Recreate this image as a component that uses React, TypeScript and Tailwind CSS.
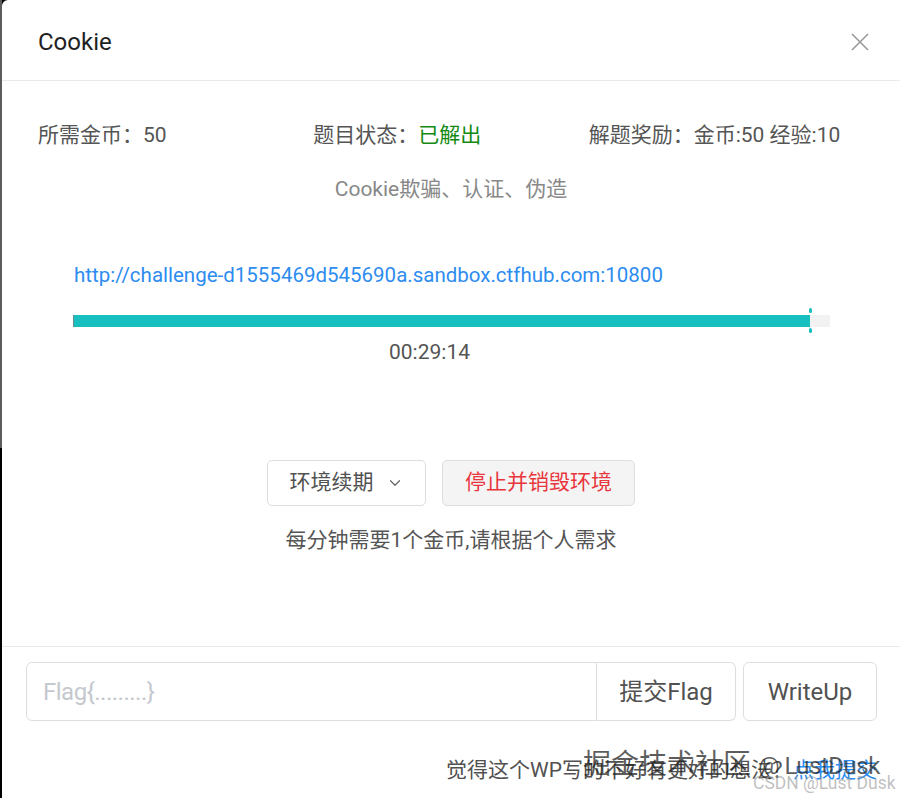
import { ChevronDown } from "lucide-react";

const font = {
  fontFamily: '"Roboto", "Noto Sans CJK SC", sans-serif',
};

function CloseIcon() {
  return (
    <svg width="20" height="20" viewBox="0 0 20 20" className="text-[#999]">
      <path d="M2 2 L18 18 M18 2 L2 18" stroke="currentColor" strokeWidth="1.6" fill="none" />
    </svg>
  );
}

export default function App() {
  const filled = 97.4;
  return (
    <div className="flex h-[798px] w-[900px] overflow-hidden bg-black" style={font}>
      {/* backdrop sliver on the left */}
      <div className="flex w-[2px] flex-col">
        <div className="h-[448px] bg-[#5c5c5c]" />
        <div className="flex-1 bg-black" />
      </div>

      <div className="relative flex flex-1 flex-col rounded-tl-[6px] bg-white">
        {/* header */}
        <div className="flex h-[81px] items-center justify-between border-b border-[#e8eaec] pl-[36px] pr-[30px] pt-[3px]">
          <span className="text-[24px] font-normal text-[#1f1f1f]">Cookie</span>
          <CloseIcon />
        </div>

        {/* body */}
        <div className="flex h-[565px] flex-col">
          <div className="mt-[40px] grid grid-cols-3 px-[36px] text-[21px] leading-[28px] text-[#555]">
            <div>所需金币：50</div>
            <div>
              题目状态：<span className="text-[#138a13]">已解出</span>
            </div>
            <div>解题奖励：金币:50 经验:10</div>
          </div>

          <div className="mt-[26px] text-center text-[21px] leading-[28px] text-[#888]">
            Cookie欺骗、认证、伪造
          </div>

          <div className="mt-[58px] pl-[72px] pr-[70px]">
            <div className="text-[20.5px] leading-[28px] text-[#2d8cf0]">
              http://challenge-d1555469d545690a.sandbox.ctfhub.com:10800
            </div>
            <div className="relative mt-[26px] h-[12px] bg-[#f2f2f2]">
              <div className="h-full bg-[#17c0bf]" style={{ width: `${filled}%` }} />
              <div className="absolute left-[-1px] top-0 h-full w-[1px] bg-[#6a8f8e]" />
              <div
                className="absolute top-[-7px] h-[5px] w-[3px] rounded-full bg-[#17c0bf]"
                style={{ left: `calc(${filled}% - 1px)` }}
              />
              <div
                className="absolute bottom-[-6px] h-[5px] w-[3px] rounded-full bg-[#17c0bf]"
                style={{ left: `calc(${filled}% - 1px)` }}
              />
            </div>
            <div className="mt-[11px] pl-[315px] text-[21px] leading-[28px] text-[#555]">00:29:14</div>
          </div>

          <div className="mt-[94px] flex justify-center gap-[16px]">
            <button className="flex h-[46px] w-[159px] items-center justify-center gap-[12px] rounded-[5px] border border-[#dcdee2] bg-white text-[21px] text-[#515151]">
              <span>环境续期</span>
              <ChevronDown size={18} strokeWidth={1.6} className="text-[#666]" />
            </button>
            <button className="flex h-[46px] w-[193px] items-center justify-center rounded-[5px] border border-[#dcdee2] bg-[#f4f4f4] text-[21px] text-[#e9363c]">
              停止并销毁环境
            </button>
          </div>

          <div className="mt-[20px] text-center text-[21px] leading-[28px] text-[#555]">
            每分钟需要1个金币,请根据个人需求
          </div>
        </div>

        {/* footer */}
        <div className="flex flex-1 flex-col border-t border-[#e8eaec] pl-[24px] pr-[23px] pt-[15px]">
          <div className="flex gap-[7px]">
            <div className="flex h-[59px] flex-1">
              <input
                placeholder="Flag{.........}"
                className="h-full min-w-0 flex-1 rounded-l-[6px] border border-[#dcdee2] px-[16px] text-[24px] tracking-[-0.5px] text-[#515a6e] outline-none placeholder:text-[#c5c8ce]"
              />
              <button className="h-full w-[139px] rounded-r-[6px] border border-l-0 border-[#dcdee2] bg-white text-[24px] text-[#515151]">
                提交Flag
              </button>
            </div>
            <button className="h-[59px] w-[134px] rounded-[6px] border border-[#dcdee2] bg-white text-[24px] text-[#515151]">
              WriteUp
            </button>
          </div>
          <div className="mt-[35px] text-right text-[21px] leading-[28px] text-[#515151]">
            觉得这个WP写的不好有更好的想法？<span className="text-[#2d8cf0]">点我提交</span>
          </div>
        </div>

        {/* watermarks */}
        <div className="pointer-events-none absolute left-[581px] top-[747px] whitespace-nowrap text-[28px] leading-[36px] text-[rgba(30,30,30,0.72)]">
          掘金技术社区 <span className="text-[24px] tracking-[-0.5px]">@ LustDusk</span>
        </div>
        <div className="pointer-events-none absolute left-[751px] top-[772px] whitespace-nowrap text-[17.5px] leading-[22px] text-[rgba(150,150,150,0.6)]">
          CSDN @Lust Dusk
        </div>
      </div>
    </div>
  );
}
